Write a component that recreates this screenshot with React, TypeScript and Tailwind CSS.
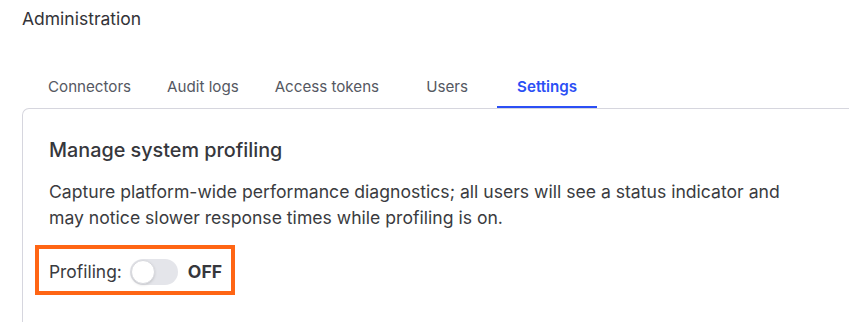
import React from "react";

const tabs = ["Connectors", "Audit logs", "Access tokens", "Users", "Settings"];

export default function App() {
  return (
    <div
      className="w-[849px] h-[322px] overflow-hidden bg-white"
      style={{ fontFamily: "Inter, 'Noto Sans', sans-serif" }}
    >
      <div className="pl-[22px] pt-[8px]">
        <div className="text-[17.5px] leading-[22px] text-[#333338]">Administration</div>
        <div className="mt-[38px] flex pl-[8px]">
          {tabs.map((t) => {
            const active = t === "Settings";
            return (
              <div
                key={t}
                className={
                  active
                    ? "min-w-[100px] px-[18px] h-[40px] flex items-center justify-center text-[15.15px] font-semibold text-[#2b4ff5] border-b-2 border-[#2b4ff5]"
                    : "min-w-[100px] px-[18px] h-[40px] flex items-center justify-center text-[15.15px] text-[#555862] border-b-2 border-transparent"
                }
              >
                {t}
              </div>
            );
          })}
        </div>
        <div className="border-t border-l border-[#d6d6de] rounded-tl-[7px] pl-[26px] pt-[27px] h-[300px]">
          <div className="text-[19.8px] leading-[28px] font-medium text-[#36373c]">Manage system profiling</div>
          <p className="mt-[15px] text-[17.6px] leading-[26px] text-[#3a3b40] whitespace-nowrap">
            Capture platform-wide performance diagnostics; all users will see a status indicator and
            <br />
            may notice slower response times while profiling is on.
          </p>
          <div className="mt-[14px] -ml-[14px] w-fit border-4 border-[#ff6514] pl-[10px] pr-[9px] pt-[10px] pb-[6px] flex items-center">
            <span className="text-[17.4px] leading-[26px] text-[#3a3b40]">Profiling:</span>
            <div className="ml-[8px] w-[48px] h-[26px] rounded-full bg-[#e4e5ea] p-[1px] flex items-center">
              <div className="w-[24px] h-[24px] rounded-full bg-white border border-[#d8d9de] shadow-sm" />
            </div>
            <span className="ml-[10px] text-[17.6px] leading-[26px] font-bold text-[#36373c]">OFF</span>
          </div>
        </div>
      </div>
    </div>
  );
}
